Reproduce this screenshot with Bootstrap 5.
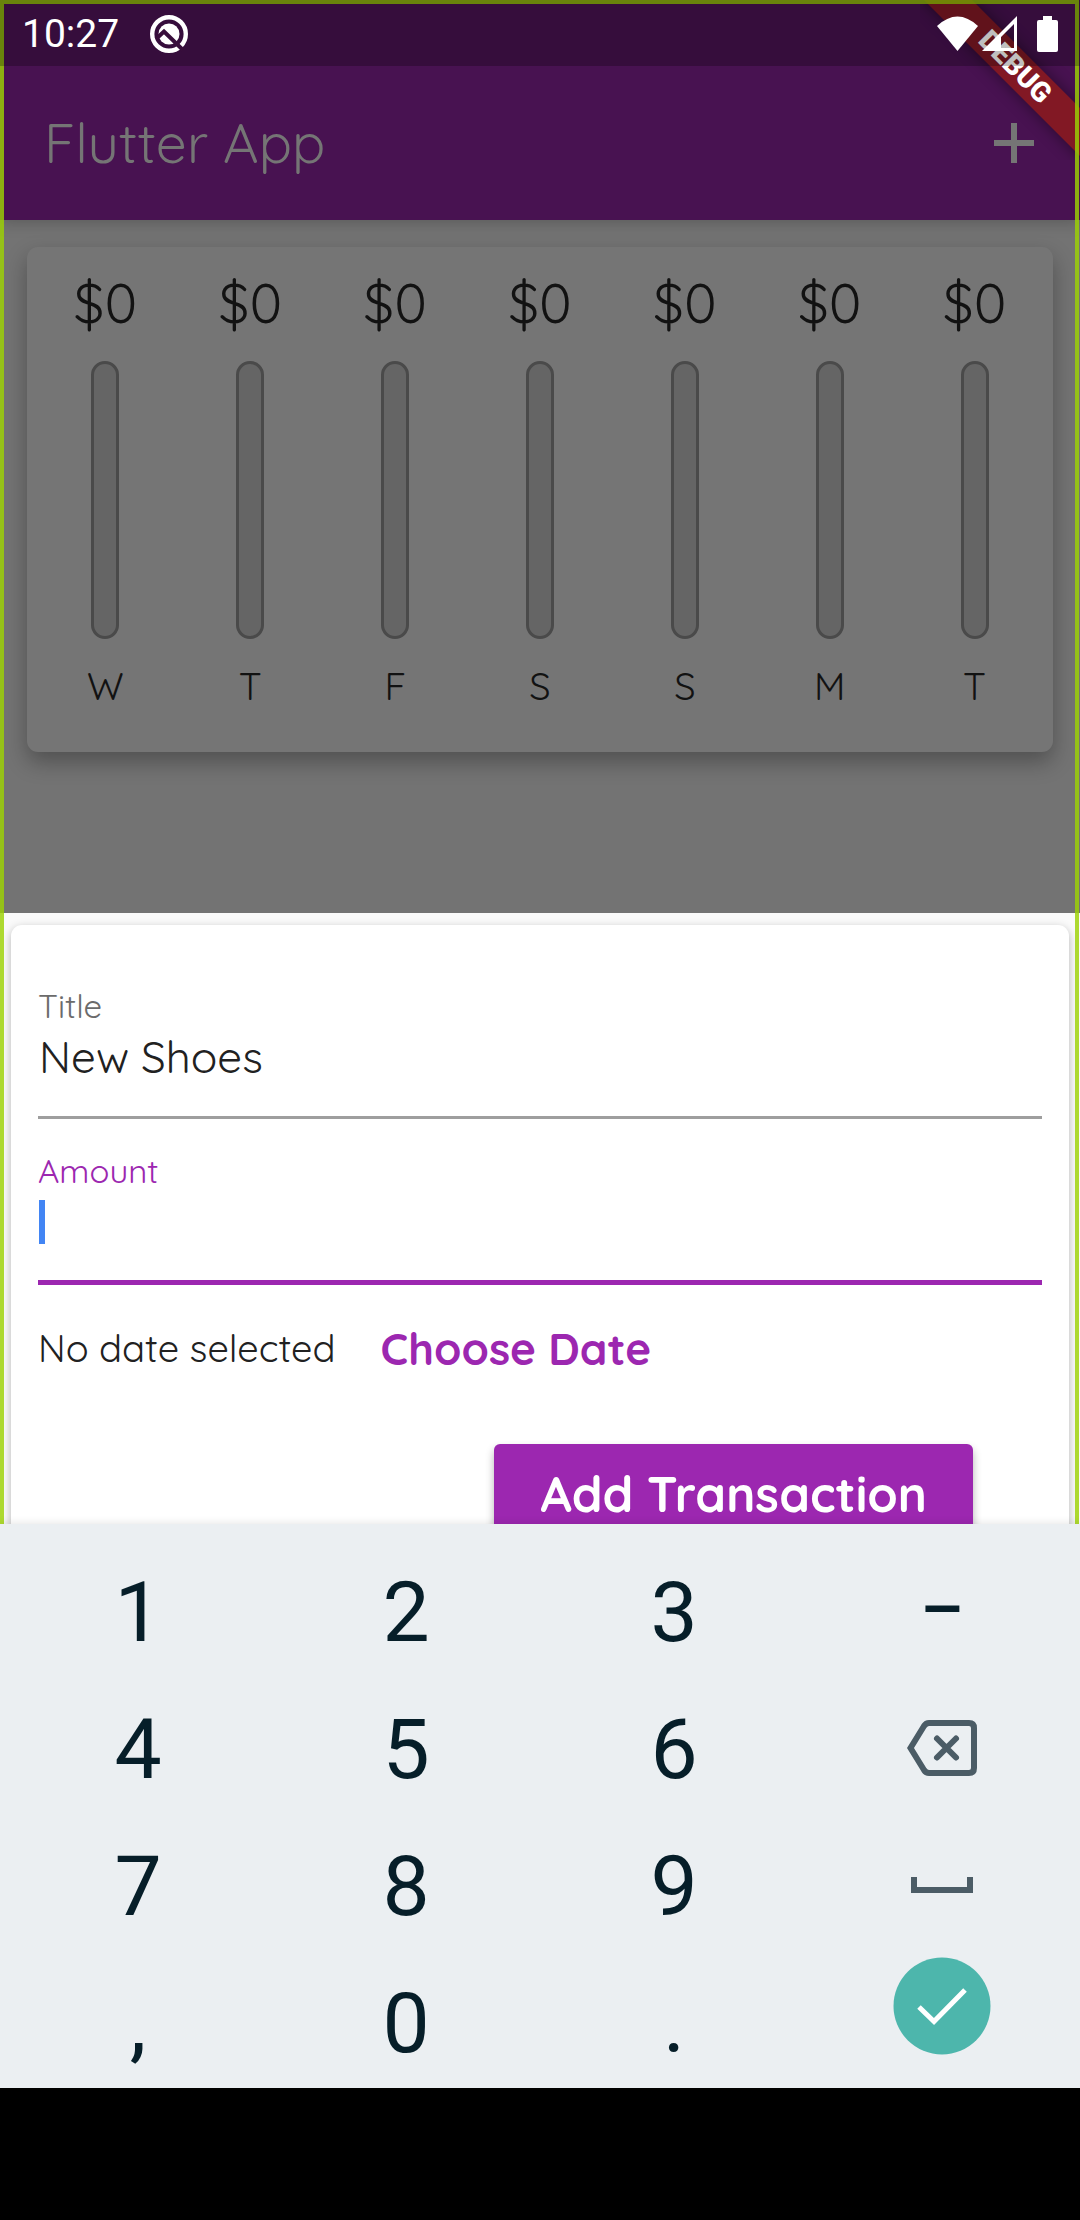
<!DOCTYPE html>
<html lang="en">
<head>
<meta charset="utf-8">
<meta name="viewport" content="width=device-width, initial-scale=1">
<title>Flutter App</title>
<link href="https://cdn.jsdelivr.net/npm/bootstrap@5.3.0/dist/css/bootstrap.min.css" rel="stylesheet">
<style>
  :root { --purple: #9c27b0; --ink: #061e29; --key-icon: #4b5c66; }
  body { font-family: Quicksand, Lato, sans-serif; font-weight: 400; background: #000; color: #212121; }
  button, input { font-family: inherit; }
  svg { display: block; flex: none; }

  .app-window { background: #737373; }
  .debug-frame { inset: 0 1px 0 0; border: 4px solid rgba(156, 210, 4, .82); border-bottom: 0; pointer-events: none; z-index: 3; }

  .status-strip { height: 66px; padding: 2px 22px 0; gap: 30px; background: rgba(0, 0, 0, .25); color: #fff; font: 400 39px/64px Roboto, sans-serif; z-index: 4; }
  .top-area { background: #481251; box-shadow: 0 3px 14px rgba(0, 0, 0, .2); }
  .app-bar { height: 154px; padding: 0 46px 0 44px; color: #757575; }
  .app-bar h1 { font-size: 55px; line-height: 64px; font-weight: 400; }
  .add-btn { color: #757575; }

  .banner-corner { top: 0; right: 0; width: 160px; height: 160px; z-index: 2; }
  .banner-ribbon { left: -25px; top: 50px; width: 240px; height: 34px; transform: rotate(45deg); background: #821824; color: #fff; font: 900 28px/34px Roboto, sans-serif; text-align: center; box-shadow: 0 0 16px rgba(0, 0, 0, .45); }

  .chart-area { padding: 27px 27px 161px; }
  .chart-card { background: #757575; border-radius: 11px; padding: 26px 6px 40px; box-shadow: 0 10px 22px rgba(0, 0, 0, .3); color: #121212; }
  .day-total { font-size: 55px; line-height: 60px; }
  .day-bar { width: 28px; height: 278px; margin: 28px 0 22px; background: #656565; border: 3px solid #4a4a4a; border-radius: 14px; }
  .day-name { font-size: 38px; line-height: 51px; }

  .sheet { background: #fafafa; padding: 12px 11px 0; }
  .sheet-card { background: #fff; border-radius: 11px; padding: 63px 27px 27px; box-shadow: 0 3px 10px rgba(0, 0, 0, .28); }
  .field-label { font-size: 33px; line-height: 36px; color: #6b6b6b; }
  .field-label.active { color: var(--purple); }
  .line-input { font-size: 44px; line-height: 44px; font-weight: 400; color: #212121; padding: 10px 1px 38px; border: 0; border-bottom: 3px solid #9e9e9e; border-radius: 0; height: 95px; background: transparent; }
  .line-input:focus { box-shadow: none; outline: 0; }
  .line-input.active { border-bottom: 5px solid var(--purple); height: 96px; background: linear-gradient(#4285f4, #4285f4) no-repeat 1px 11px / 6px 44px; }
  .field + .field { margin-top: 34px; }
  .date-row { height: 127px; font-size: 38px; gap: 45px; }
  .date-btn { font-size: 44px; font-weight: 700; color: var(--purple); }
  .submit-btn { height: 99px; padding: 0 46px; margin: 32px 69px 0 0; border: 0; border-radius: 6px; background: var(--purple); color: #fff; font-size: 49px; font-weight: 700; box-shadow: 0 5px 8px rgba(0, 0, 0, .3); }

  .keypad { background: #ebeff2; margin-top: -46px; padding: 18px 4px 0; height: 564px; z-index: 5; box-shadow: 0 -1px 8px rgba(0, 0, 0, .1); }
  .key { height: 137px; border: 0; background: none; color: var(--ink); font: 400 84px/137px Roboto, sans-serif; padding: 2px 0 0; }
  .key svg { margin: 0 auto; }
  .key-dash { font-size: 68px; font-weight: 500; padding: 0; }
  .key-icon { padding-top: 0; }
  .key-enter { padding: 0 0 32px; }
</style>
<script src="https://cdn.jsdelivr.net/npm/bootstrap@5.3.0/dist/js/bootstrap.bundle.min.js"></script>
</head>
<body>
<div class="app-window position-relative">
  <header class="top-area position-relative">
    <div class="banner-corner position-absolute overflow-hidden"><div class="banner-ribbon position-absolute">DEBUG</div></div>
    <div class="status-strip d-flex align-items-center position-relative">
      <span>10:27</span>
      <svg width="40" height="40" viewBox="0 0 40 40" aria-hidden="true">
        <circle cx="20" cy="20" r="16.800" fill="none" stroke="#fff" stroke-width="4.400"/>
        <circle cx="20" cy="20" r="10.500" fill="#fff"/>
        <path d="M7 25L15 17.500L34 36" fill="none" stroke="#380e3b" stroke-width="4"/>
      </svg>
      <div class="d-flex align-items-center ms-auto">
        <svg width="41" height="36" viewBox="0 0 41 36" aria-hidden="true"><path d="M0 10Q20.500-9 41 10L20.500 35Z" fill="#fff"/></svg>
        <svg class="ms-1 me-3" width="35" height="36" viewBox="0 0 35 36" aria-hidden="true"><path d="M35 0V35H0ZM32 8L19 21V32H32Z" fill="#fff" fill-rule="evenodd"/></svg>
        <svg class="ms-1" width="21" height="36" viewBox="0 0 21 36" aria-hidden="true"><path d="M6 0H15V4H19Q21 4 21 6V34Q21 36 19 36H2Q0 36 0 34V6Q0 4 2 4H6Z" fill="#fff"/></svg>
      </div>
    </div>
    <div class="app-bar d-flex align-items-center justify-content-between">
      <h1 class="m-0">Flutter App</h1>
      <button class="btn p-0 border-0 add-btn" type="button" aria-label="Add transaction">
        <svg width="40" height="40" viewBox="0 0 40 40"><path d="M17 0H23V17H40V23H23V40H17V23H0V17H17Z" fill="currentColor"/></svg>
      </button>
    </div>
  </header>

  <main>
    <section class="chart-area">
      <div class="chart-card row row-cols-7 g-0 text-center">
        <div class="col d-flex flex-column align-items-center"><span class="day-total">$0</span><span class="day-bar"></span><span class="day-name">W</span></div>
        <div class="col d-flex flex-column align-items-center"><span class="day-total">$0</span><span class="day-bar"></span><span class="day-name">T</span></div>
        <div class="col d-flex flex-column align-items-center"><span class="day-total">$0</span><span class="day-bar"></span><span class="day-name">F</span></div>
        <div class="col d-flex flex-column align-items-center"><span class="day-total">$0</span><span class="day-bar"></span><span class="day-name">S</span></div>
        <div class="col d-flex flex-column align-items-center"><span class="day-total">$0</span><span class="day-bar"></span><span class="day-name">S</span></div>
        <div class="col d-flex flex-column align-items-center"><span class="day-total">$0</span><span class="day-bar"></span><span class="day-name">M</span></div>
        <div class="col d-flex flex-column align-items-center"><span class="day-total">$0</span><span class="day-bar"></span><span class="day-name">T</span></div>
      </div>
    </section>

    <section class="sheet">
      <form class="sheet-card">
        <div class="field">
          <label class="field-label d-block" for="title">Title</label>
          <input class="form-control line-input" id="title" type="text" value="New Shoes">
        </div>
        <div class="field">
          <label class="field-label active d-block" for="amount">Amount</label>
          <input class="form-control line-input active" id="amount" type="text" inputmode="decimal">
        </div>
        <div class="date-row d-flex align-items-center">
          <span>No date selected</span>
          <button class="btn p-0 border-0 date-btn" type="button">Choose Date</button>
        </div>
        <div class="d-flex justify-content-end">
          <button class="submit-btn" type="submit">Add Transaction</button>
        </div>
      </form>
    </section>
  </main>
  <div class="debug-frame position-absolute"></div>
  <div class="keypad position-relative">
    <div class="row row-cols-4 g-0">
      <button class="key col" type="button">1</button>
      <button class="key col" type="button">2</button>
      <button class="key col" type="button">3</button>
      <button class="key key-dash col" type="button">–</button>
      <button class="key col" type="button">4</button>
      <button class="key col" type="button">5</button>
      <button class="key col" type="button">6</button>
      <button class="key key-icon col" type="button" aria-label="Backspace">
        <svg width="70" height="56" viewBox="0 0 70 56" fill="none" stroke="#4b5c66"><path d="M22 3H62Q67 3 67 8V48Q67 53 62 53H22Q19 53 17 50L3.500 28L17 6Q19 3 22 3Z" stroke-width="6"/><path d="M30 18.500L49 37.500M49 18.500L30 37.500" stroke-width="6" stroke-linecap="round"/></svg>
      </button>
      <button class="key col" type="button">7</button>
      <button class="key col" type="button">8</button>
      <button class="key col" type="button">9</button>
      <button class="key key-icon col" type="button" aria-label="Space">
        <svg width="62" height="16" viewBox="0 0 62 16" fill="none" stroke="#4b5c66"><path d="M3 0V13H59V0" stroke-width="6"/></svg>
      </button>
      <button class="key col" type="button">,</button>
      <button class="key col" type="button">0</button>
      <button class="key col" type="button">.</button>
      <button class="key key-enter col" type="button" aria-label="Done">
        <svg width="98" height="98" viewBox="0 0 98 98"><circle cx="49" cy="49" r="48.500" fill="#4db6ac"/><path d="M26 50L41 64.500L72 33" fill="none" stroke="#fff" stroke-width="5"/></svg>
      </button>
    </div>
  </div>
</div>
</body>
</html>
